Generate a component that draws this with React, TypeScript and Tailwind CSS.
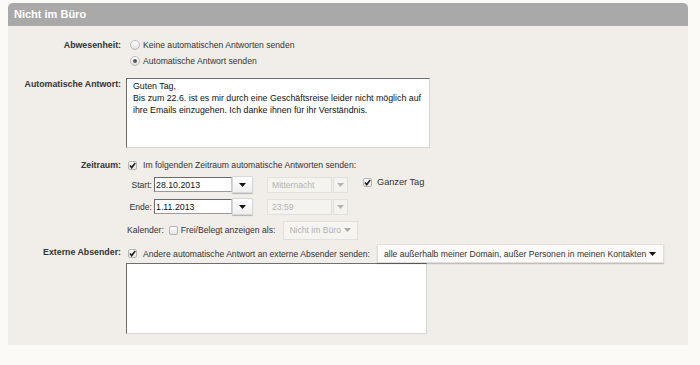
import type { ReactNode } from "react";

function Check({ checked, className = "" }: { checked: boolean; className?: string }): JSX.Element {
  return (
    <span
      className={`inline-flex h-[9px] w-[9px] shrink-0 items-center justify-center rounded-[2px] border border-[#b4b4b4] bg-gradient-to-b from-white to-[#e4e4e4] ${className}`}
    >
      {checked ? (
        <svg width="7" height="7" viewBox="0 0 7 7">
          <path d="M1 3.6 2.7 5.6 6.2 1" fill="none" stroke="#222" strokeWidth="1.6" />
        </svg>
      ) : null}
    </span>
  );
}

function Radio({ checked }: { checked: boolean }): JSX.Element {
  return (
    <span className="inline-flex h-[10px] w-[10px] shrink-0 items-center justify-center rounded-full border border-[#bababa] bg-gradient-to-b from-white to-[#e2e2e2]">
      {checked ? <span className="h-[4px] w-[4px] rounded-full bg-[#555]" /> : null}
    </span>
  );
}

function Caret({ color }: { color: string }): JSX.Element {
  return (
    <svg width="7" height="4" viewBox="0 0 7 4" className="shrink-0">
      <path d="M0 0h7L3.5 4z" fill={color} />
    </svg>
  );
}

function Row({ label, children, className = "" }: { label: string; children: ReactNode; className?: string }): JSX.Element {
  return (
    <div className={`flex ${className}`}>
      <div className="w-[113px] shrink-0 text-right text-[8.8px] font-bold text-[#333]">{label}</div>
      <div className="ml-[5px] min-w-0 flex-1">{children}</div>
    </div>
  );
}

function DateField({ label, value }: { label: string; value: string }): JSX.Element {
  return (
    <div className="flex h-[17px] items-center">
      <span className="w-[26px] shrink-0 text-right">{label}</span>
      <div className="ml-[2px] flex h-[15px] w-[78px] items-center border border-[#6a6a6a] border-b-[#9a9a9a] border-r-[#cfcfcf] bg-white pl-[1px] text-[8.8px] text-[#111]">
        {value}
      </div>
      <div className="flex h-[17px] w-[21px] items-center justify-center rounded-[1px] border border-[#d6d6d6] bg-gradient-to-b from-white to-[#efefef] shadow-[0_1px_1px_rgba(0,0,0,0.25)]">
        <Caret color="#111" />
      </div>
    </div>
  );
}

function TimeField({ value }: { value: string }): JSX.Element {
  return (
    <div className="ml-[14px] flex h-[17px] items-center">
      <div className="flex h-[16px] w-[65px] items-center border border-[#e3dfdb] bg-[#f5f3f0] pl-[4px] text-[#b3b3b3]">
        {value}
      </div>
      <div className="ml-[1px] flex h-[16px] w-[15px] items-center justify-center border border-[#e3dfdb] bg-[#f5f3f0]">
        <Caret color="#b5b5b5" />
      </div>
    </div>
  );
}

export default function App(): JSX.Element {
  return (
    <div className="min-h-screen bg-[#fbfaf7] pt-[3px] font-['Liberation_Sans',Arial,Helvetica,sans-serif] text-[8.6px] text-[#333]">
      <div className="ml-2 w-[680px] bg-[#f1ede9] pb-[11px]">
        <div className="h-[23px] rounded-t-[5px] bg-[#a9a9a9] pl-[6px] text-[11px] font-bold leading-[23px] text-white">
          Nicht im Büro
        </div>

        <div className="pt-[11px] leading-[16px]">
          <Row label="Abwesenheit:">
            <div className="flex h-[16px] items-center gap-[3px] pl-[4px]">
              <Radio checked={false} />
              <span>Keine automatischen Antworten senden</span>
            </div>
            <div className="flex h-[16px] items-center gap-[3px] pl-[4px]">
              <Radio checked />
              <span>Automatische Antwort senden</span>
            </div>
          </Row>

          <Row label="Automatische Antwort:" className="mt-[9px] leading-[12px]">
            <textarea
              readOnly
              defaultValue={
                "Guten Tag,\nBis zum 22.6. ist es mir durch eine Geschäftsreise leider nicht möglich auf ihre Emails einzugehen. Ich danke ihnen für ihr Verständnis."
              }
              className="block h-[70px] w-[304px] resize-none border border-[#6e6e6e] border-b-[#d6d6d6] border-r-[#d6d6d6] bg-white px-[6px] pt-[1px] text-[8.8px] leading-[12px] text-[#111] outline-none"
            />
          </Row>

          <Row label="Zeitraum:" className="mt-[9px]">
            <div className="flex h-[16px] items-center gap-[6px] pl-[2px]">
              <Check checked />
              <span>Im folgenden Zeitraum automatische Antworten senden:</span>
            </div>

            <div className="mt-[3px] flex items-start">
              <DateField label="Start:" value="28.10.2013" />
              <TimeField value="Mitternacht" />
              <div className="ml-[15px] flex h-[11px] items-center gap-[5px] pt-[1px]">
                <Check checked />
                <span className="text-[9.2px]">Ganzer Tag</span>
              </div>
            </div>

            <div className="mt-[5px] flex items-start">
              <DateField label="Ende:" value="1.11.2013" />
              <TimeField value="23:59" />
            </div>

            <div className="mt-[5px] flex h-[20px] items-center whitespace-nowrap pl-[1px]">
              <span>Kalender:</span>
              <Check checked={false} className="ml-[5px]" />
              <span className="ml-[3px]">Frei/Belegt anzeigen als:</span>
              <div className="ml-[8px] flex h-[19px] w-[75px] shrink-0 items-center justify-between border border-[#e3dfdb] bg-[#f6f4f1] pl-[5px] pr-[6px] text-[#b0b0b0]">
                <span>Nicht im Büro</span>
                <Caret color="#aaa" />
              </div>
            </div>
          </Row>

          <Row label="Externe Absender:" className="mt-[4px]">
            <div className="flex h-[19px] items-center whitespace-nowrap pl-[2px]">
              <Check checked />
              <span className="ml-[6px]">Andere automatische Antwort an externe Absender senden:</span>
              <div className="ml-[7px] flex h-[19px] w-[287px] shrink-0 items-center justify-between border border-[#e2dfdb] bg-[#fbfaf8] pl-[6px] pr-[7px] text-[#333] shadow-[0_1px_1px_rgba(0,0,0,0.2)]">
                <span>alle außerhalb meiner Domain, außer Personen in meinen Kontakten</span>
                <Caret color="#111" />
              </div>
            </div>
            <textarea
              readOnly
              defaultValue=""
              className="block h-[71px] w-[301px] resize-none border border-[#6e6e6e] border-b-[#d6d6d6] border-r-[#d6d6d6] bg-white outline-none"
            />
          </Row>
        </div>
      </div>
    </div>
  );
}
